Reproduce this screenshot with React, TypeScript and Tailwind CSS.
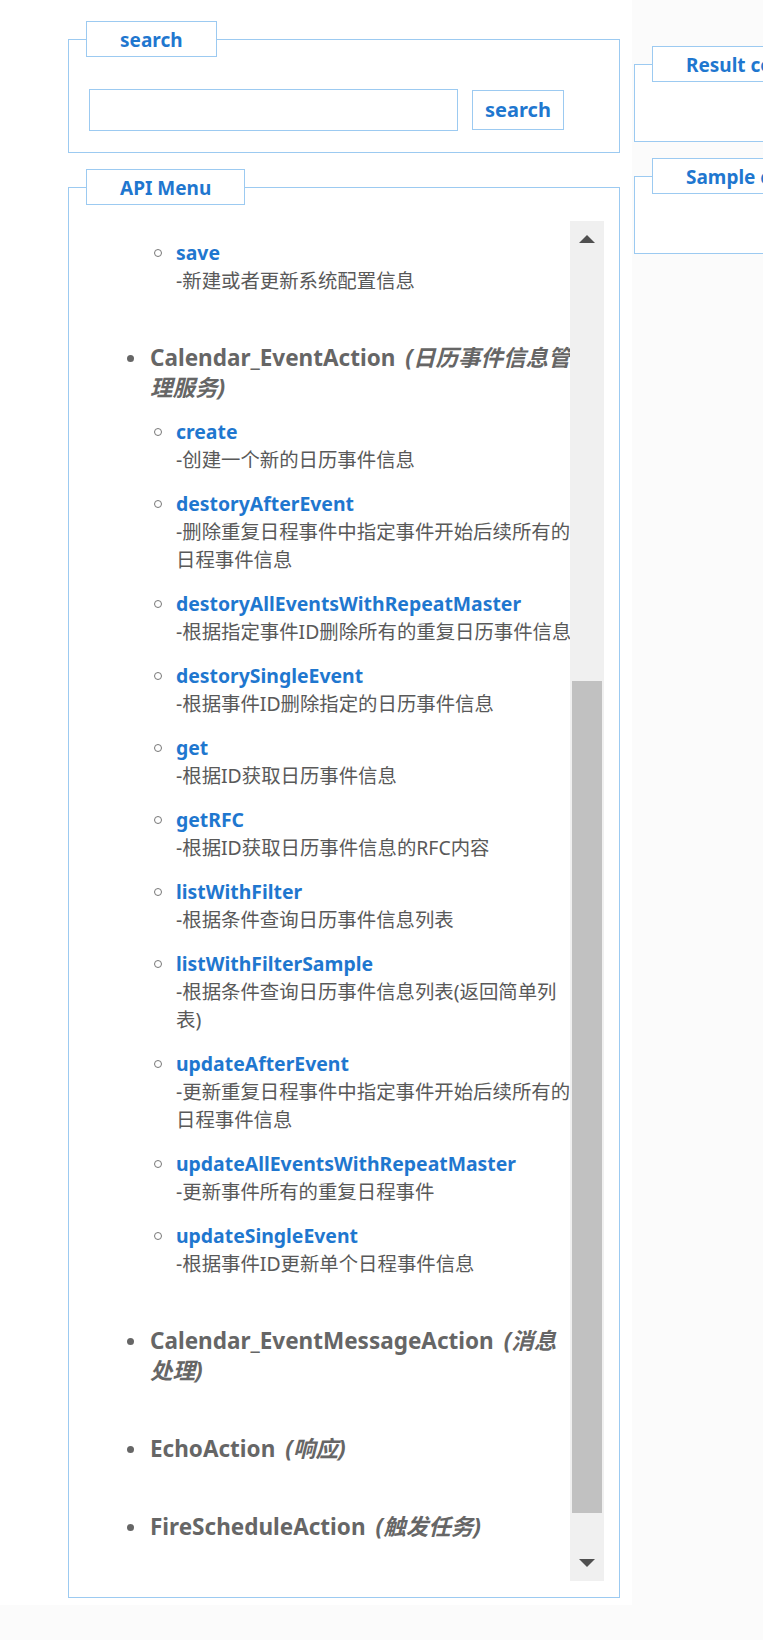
import React from "react";

type SubItem = { name: string; desc: string };
type Group = { name?: string; lines?: [string, string?]; subs?: SubItem[] };

const GROUPS: Group[] = [
  { subs: [{ name: "save", desc: "-新建或者更新系统配置信息" }] },
  {
    name: "Calendar_EventAction",
    lines: ["(日历事件信息管", "理服务)"],
    subs: [
      { name: "create", desc: "-创建一个新的日历事件信息" },
      { name: "destoryAfterEvent", desc: "-删除重复日程事件中指定事件开始后续所有的日程事件信息" },
      { name: "destoryAllEventsWithRepeatMaster", desc: "-根据指定事件ID删除所有的重复日历事件信息" },
      { name: "destorySingleEvent", desc: "-根据事件ID删除指定的日历事件信息" },
      { name: "get", desc: "-根据ID获取日历事件信息" },
      { name: "getRFC", desc: "-根据ID获取日历事件信息的RFC内容" },
      { name: "listWithFilter", desc: "-根据条件查询日历事件信息列表" },
      { name: "listWithFilterSample", desc: "-根据条件查询日历事件信息列表(返回简单列表)" },
      { name: "updateAfterEvent", desc: "-更新重复日程事件中指定事件开始后续所有的日程事件信息" },
      { name: "updateAllEventsWithRepeatMaster", desc: "-更新事件所有的重复日程事件" },
      { name: "updateSingleEvent", desc: "-根据事件ID更新单个日程事件信息" },
    ],
  },
  { name: "Calendar_EventMessageAction", lines: ["(消息", "处理)"] },
  { name: "EchoAction", lines: ["(响应)"] },
  { name: "FireScheduleAction", lines: ["(触发任务)"] },
];

const Legend = ({ children }: { children: React.ReactNode }) => (
  <legend className="border border-[#9ccaf1] bg-white px-[33px] pt-[2px] leading-[32px] text-[19px] font-bold text-[#1f77cf] whitespace-nowrap">
    {children}
  </legend>
);

const Arrow = ({ down }: { down?: boolean }) => (
  <svg width="16" height="8" viewBox="0 0 16 8">
    <polygon points={down ? "0,0 16,0 8,8" : "8,0 16,8 0,8"} fill="#505050" />
  </svg>
);

const SubList = ({ subs }: { subs: SubItem[] }) => (
  <ul className="flex flex-col gap-[16px]">
    {subs.map((s) => (
      <li key={s.name} className="flex">
        <div className="w-[26px] h-[28px] shrink-0 flex items-center">
          <span className="ml-[4px] w-[8px] h-[8px] rounded-full border-[1.5px] border-[#777]" />
        </div>
        <div className="flex-1 min-w-0 -mr-[5px] text-[19.4px] leading-[28px]">
          <div className="font-bold text-[#1f77cf]">{s.name}</div>
          <div className="text-[#595959]">{s.desc}</div>
        </div>
      </li>
    ))}
  </ul>
);

export default function App() {
  return (
    <div className="w-[763px] h-[1640px] overflow-hidden bg-[#fbfbfb] flex font-['Noto_Sans','Noto_Sans_CJK_SC',sans-serif]">
      {/* LEFT COLUMN */}
      <div className="w-[632px] h-[1605px] shrink-0 bg-white pl-[68px] pr-[12px] pt-[21px] flex flex-col gap-[16px]">
        {/* SEARCH */}
        <fieldset className="m-0 min-w-0 border border-[#9ccaf1] bg-white pl-[17px] pr-[15px] pt-[32px] pb-[21px]">
          <Legend>search</Legend>
          <div className="flex items-center">
            <input className="ml-[3px] w-[369px] h-[42px] border border-[#9ccaf1] bg-white outline-none" />
            <button className="ml-[14px] w-[92px] h-[40px] border border-[#9ccaf1] bg-white text-[20px] font-bold text-[#1f77cf]">
              search
            </button>
          </div>
        </fieldset>

        {/* API MENU */}
        <fieldset className="m-0 min-w-0 border border-[#9ccaf1] bg-white pl-[17px] pr-[15px] pt-[16px] pb-[16px]">
          <Legend>API Menu</Legend>
          <div className="flex h-[1360px]">
            <div className="ml-[3px] flex-1 min-w-0 overflow-hidden pt-[18px] pl-[31px]">
              <ul className="flex flex-col gap-[48px]">
                {GROUPS.map((g, i) =>
                  g.name ? (
                    <li key={i} className="flex">
                      <div className="w-[30px] h-[30px] shrink-0 flex items-center">
                        <span className="ml-[7px] w-[7px] h-[7px] rounded-full bg-[#666]" />
                      </div>
                      <div className="flex-1 min-w-0">
                        <div className="text-[22.5px] leading-[30px] font-bold text-[#666] whitespace-nowrap">
                          {g.name}
                          <em className="italic ml-[10px]">
                            {g.lines?.[0]}
                            {g.lines?.[1] && (
                              <>
                                <br />
                                {g.lines[1]}
                              </>
                            )}
                          </em>
                        </div>
                        {g.subs && (
                          <div className="mt-[15px]">
                            <SubList subs={g.subs} />
                          </div>
                        )}
                      </div>
                    </li>
                  ) : (
                    <li key={i} className="pl-[30px]">
                      <SubList subs={g.subs ?? []} />
                    </li>
                  )
                )}
              </ul>
            </div>
            {/* SCROLLBAR */}
            <div className="w-[34px] shrink-0 bg-[#f0f0f0] flex flex-col">
              <div className="h-[34px] flex justify-center pt-[14px]">
                <Arrow />
              </div>
              <div className="h-[426px]" />
              <div className="h-[832px] mx-[2px] bg-[#c1c1c1]" />
              <div className="flex-1" />
              <div className="h-[34px] flex justify-center items-end pb-[14px]">
                <Arrow down />
              </div>
            </div>
          </div>
        </fieldset>
      </div>

      {/* RIGHT COLUMN */}
      <div className="w-[420px] shrink-0 ml-[2px] pt-[46px] flex flex-col gap-[16px]">
        <fieldset className="m-0 min-w-0 h-[96px] border border-[#9ccaf1] bg-white pl-[17px]">
          <Legend>Result content</Legend>
        </fieldset>
        <fieldset className="m-0 min-w-0 h-[96px] border border-[#9ccaf1] bg-white pl-[17px]">
          <Legend>Sample code</Legend>
        </fieldset>
      </div>
    </div>
  );
}
